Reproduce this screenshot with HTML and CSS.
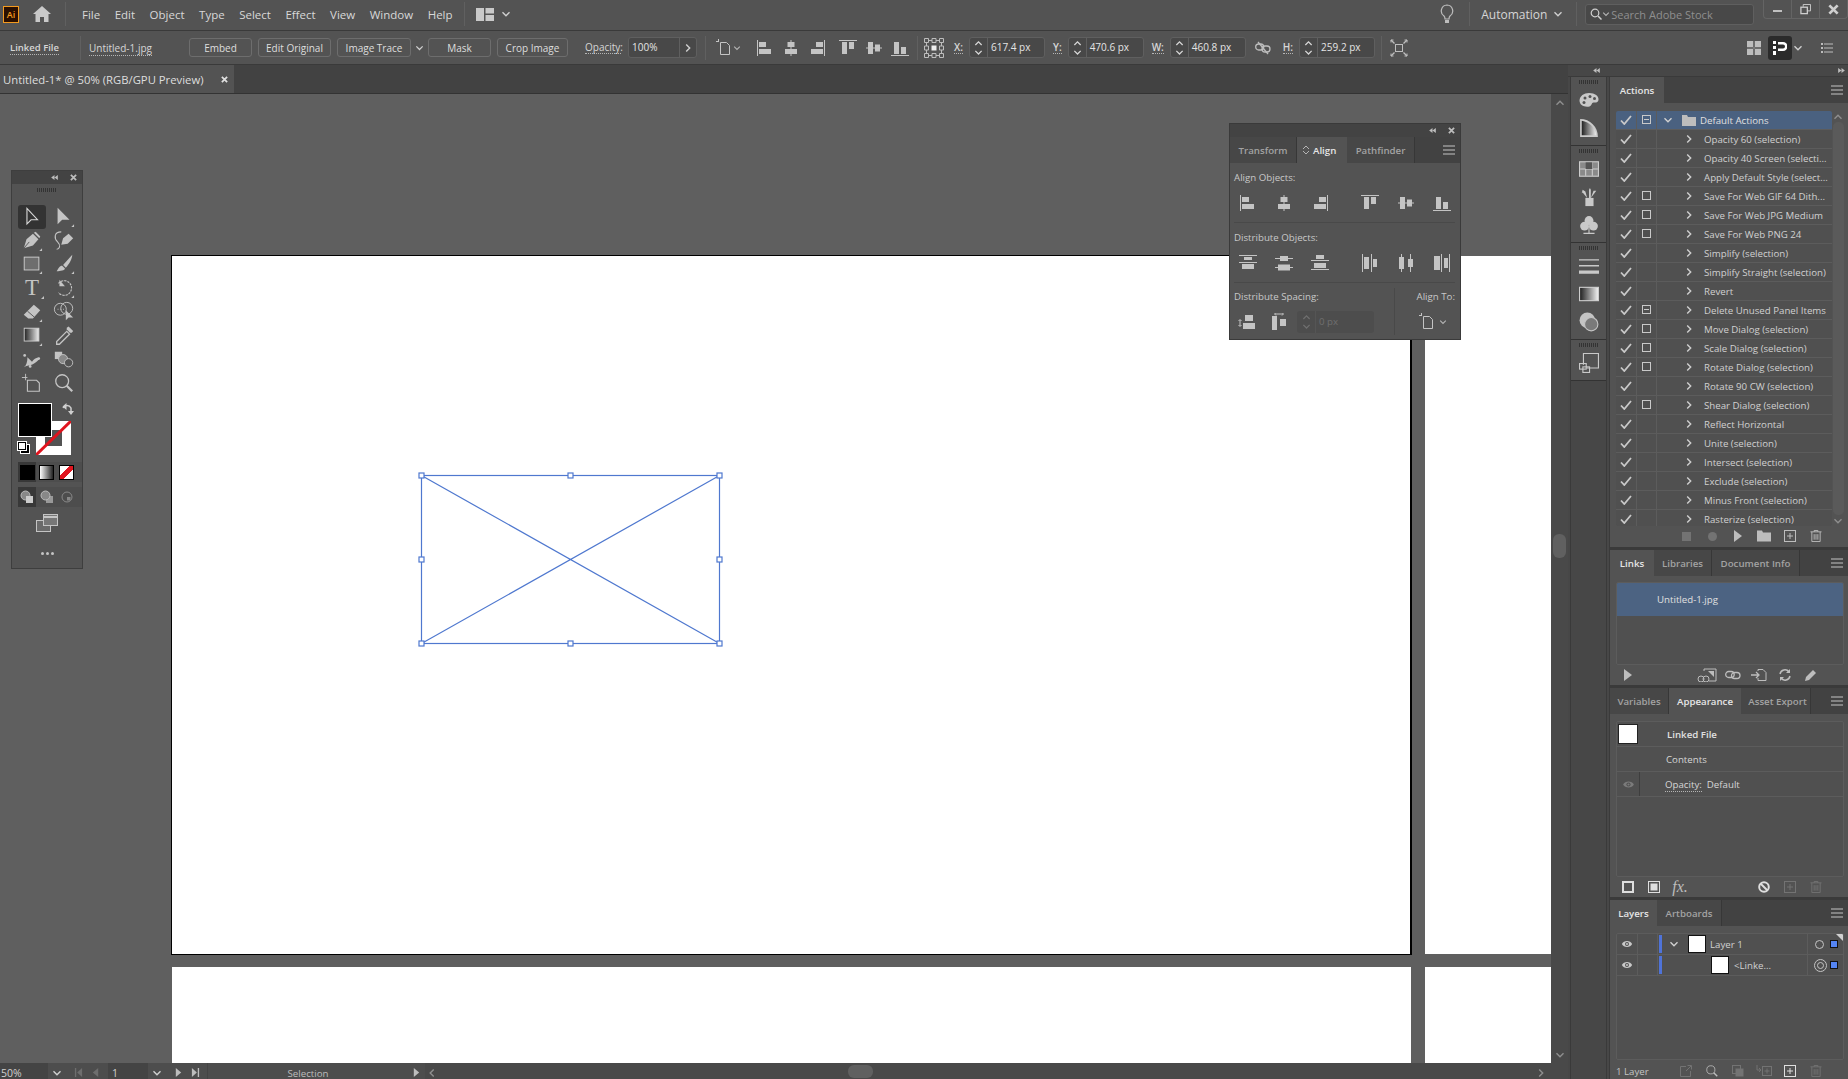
FILE: index.html
```html
<!DOCTYPE html>
<html lang="en">

<head>
    <meta charset="UTF-8">
    <meta name="viewport" content="width=device-width, initial-scale=1.0">
    <title>Adobe Illustrator</title>
    <link rel="stylesheet" href="styles.css">
</head>

<body>

    <!-- Icon sprite -->
    <svg class="sprite" xmlns="http://www.w3.org/2000/svg">
        <defs>
            <linearGradient id="grad-bw"><stop offset="0" stop-color="#222"/><stop offset="1" stop-color="#eee"/></linearGradient>
            <linearGradient id="grad-wb"><stop offset="0" stop-color="#fff"/><stop offset="1" stop-color="#333"/></linearGradient>
        </defs>
        <symbol id="chev-down" viewBox="0 0 10 10"><path d="M1.5 3.2 5 6.7 8.5 3.2" fill="none" stroke="currentColor" stroke-width="1.4"/></symbol>
        <symbol id="chev-up" viewBox="0 0 10 10"><path d="M1.5 6.7 5 3.2 8.5 6.7" fill="none" stroke="currentColor" stroke-width="1.4"/></symbol>
        <symbol id="chev-right" viewBox="0 0 10 10"><path d="M3.2 1.5 6.7 5 3.2 8.5" fill="none" stroke="currentColor" stroke-width="1.4"/></symbol>
        <symbol id="chev-left" viewBox="0 0 10 10"><path d="M6.7 1.5 3.2 5 6.7 8.5" fill="none" stroke="currentColor" stroke-width="1.4"/></symbol>
        <symbol id="updown" viewBox="0 0 8 10"><path d="M1 4 4 1l3 3M1 6l3 3 3-3" fill="none" stroke="currentColor"/></symbol>
        <symbol id="burger" viewBox="0 0 12 10"><path d="M0 1h12M0 5h12M0 9h12" stroke="currentColor" stroke-width="1"/></symbol>
        <symbol id="collapse" viewBox="0 0 8 6"><path d="M4 0v6L0 3zM8 0v6L4 3z" fill="currentColor"/></symbol>
        <symbol id="expand" viewBox="0 0 8 6"><path d="M0 0v6l4-3zM4 0v6l4-3z" fill="currentColor"/></symbol>
        <symbol id="close-x" viewBox="0 0 8 8"><path d="M1 1l6 6M7 1 1 7" stroke="currentColor" stroke-width="2"/></symbol>
        <symbol id="check" viewBox="0 0 12 10"><path d="M1 5.5 4.3 9 11 1" fill="none" stroke="currentColor" stroke-width="1.8"/></symbol>
        <symbol id="box" viewBox="0 0 10 10"><rect x=".5" y=".5" width="8" height="8" fill="none" stroke="currentColor"/></symbol>
        <symbol id="box-minus" viewBox="0 0 10 10"><rect x=".5" y=".5" width="8" height="8" fill="none" stroke="currentColor"/><path d="M2 4.5h5" stroke="currentColor"/></symbol>
        <symbol id="eye" viewBox="0 0 14 10"><path d="M1 5c2-4.500 10-4.500 12 0-2 4.500-10 4.500-12 0z" fill="currentColor"/><circle cx="7" cy="5" r="2.300" fill="#505050"/><circle cx="7" cy="5" r="1.200" fill="currentColor"/></symbol>
        <symbol id="play" viewBox="0 0 10 12"><path d="M1 0v12l8-6z" fill="currentColor"/></symbol>
        <symbol id="folder" viewBox="0 0 14 11"><path d="M0 0h5l1 2h8v9H0z" fill="currentColor"/></symbol>
        <symbol id="new-item" viewBox="0 0 12 12"><rect x=".5" y=".5" width="11" height="11" fill="none" stroke="currentColor"/><path d="M6 3v6M3 6h6" stroke="currentColor"/></symbol>
        <symbol id="trash" viewBox="0 0 12 13"><path d="M0 2h12M4 2V.5h4V2M1.500 2v10.500h9V2M4 4.500v6M6 4.500v6M8 4.500v6" fill="none" stroke="currentColor"/></symbol>
        <symbol id="doc-align" viewBox="0 0 20 18"><path d="M0 2.500h3M2.500 0v3" stroke="currentColor"/><path d="M4.500 3.500h6l3 3v9h-9z" fill="none" stroke="currentColor"/></symbol>

        <!-- Align icons -->
        <symbol id="al-left" viewBox="0 0 18 18"><path d="M1 1h1v16H1zM3 3h7v5H3zM3 10h12v5H3z" fill="currentColor"/></symbol>
        <symbol id="al-hc" viewBox="0 0 18 18"><path d="M8.500 1h1v16h-1zM5.500 3h7v5h-7zM3 10h12v5H3z" fill="currentColor"/></symbol>
        <symbol id="al-right" viewBox="0 0 18 18"><path d="M16 1h1v16h-1zM8 3h7v5H8zM3 10h12v5H3z" fill="currentColor"/></symbol>
        <symbol id="al-top" viewBox="0 0 18 18"><path d="M0 1h18v1H0zM3 3h5v12H3zM10 3h5v7h-5z" fill="currentColor"/></symbol>
        <symbol id="al-vc" viewBox="0 0 18 18"><path d="M1 8.500h16v1H1zM3 3h5v12H3zM10 5.500h5v7h-5z" fill="currentColor"/></symbol>
        <symbol id="al-bottom" viewBox="0 0 18 18"><path d="M0 16h18v1H0zM3 3h5v12H3zM10 8h5v7h-5z" fill="currentColor"/></symbol>
        <symbol id="di-top" viewBox="0 0 18 18"><path d="M0 1h18v1H0zM5 3h8v3H5zM0 8h18v1H0zM3 10h12v5H3z" fill="currentColor"/></symbol>
        <symbol id="di-vc" viewBox="0 0 18 18"><path d="M0 4h18v1H0zM5 2h8v5H5zM0 13h18v1H0zM3 10.500h12v6H3z" fill="currentColor"/></symbol>
        <symbol id="di-bottom" viewBox="0 0 18 18"><path d="M5 1h8v4H5zM0 6h18v1H0zM3 9h12v5H3zM0 15h18v1H0z" fill="currentColor"/></symbol>
        <symbol id="di-left" viewBox="0 0 18 18"><path d="M1 0h1v18H1zM3 3h5v12H3zM10 0h1v18h-1zM12 5h4v8h-4z" fill="currentColor"/></symbol>
        <symbol id="di-hc" viewBox="0 0 18 18"><path d="M4 0h1v18H4zM2 3h5v12H2zM13 0h1v18h-1zM11 5h5v8h-5z" fill="currentColor"/></symbol>
        <symbol id="di-right" viewBox="0 0 18 18"><path d="M1 2h6v14H1zM8 0h1v18H8zM11 4h4v10h-4zM16 0h1v18h-1z" fill="currentColor"/></symbol>
        <symbol id="sp-v" viewBox="0 0 18 18"><path d="M2 7v6M.5 8 2 6.500 3.500 8M.5 12 2 13.500 3.500 12" fill="none" stroke="currentColor"/><path d="M7 2h8v6H7zM5 10h12v6H5z" fill="currentColor"/></symbol>
        <symbol id="sp-h" viewBox="0 0 18 18"><path d="M5 1h8M6 -.5 4.500 1 6 2.500M12 -.5 13.500 1 12 2.500" fill="none" stroke="currentColor"/><path d="M2 3h5v14H2zM10 6h6v7h-6z" fill="currentColor"/></symbol>

        <!-- Tool icons -->
        <symbol id="t-select" viewBox="0 0 24 24"><path d="M6.500 2.500v17l4.500-4.500h7z" fill="none" stroke="#d8d8d8" stroke-width="1.200"/></symbol>
        <symbol id="t-direct" viewBox="0 0 24 24"><path d="M5 2v18l5-5h8z" fill="currentColor"/><path d="M23 20v3h-3z" fill="currentColor"/></symbol>
        <symbol id="t-pen" viewBox="0 0 24 24"><path d="M3 20 6 10l7-6 6 6-6 7z" fill="currentColor"/><path d="M3 20 9 13" stroke="#535353"/><path d="M14 3l2-1 5 5-1 2z" fill="currentColor"/><path d="M23 20v3h-3z" fill="currentColor"/></symbol>
        <symbol id="t-curve" viewBox="0 0 24 24"><path d="M9 16l2-7 6-5 5 5-6 6z" fill="currentColor"/><path d="M9 2C1 2 1 9 5 13s2 8-1 8" fill="none" stroke="currentColor" stroke-width="1.200"/></symbol>
        <symbol id="t-rect" viewBox="0 0 24 24"><rect x="3.500" y="4.500" width="16" height="14" fill="#6e6e6e" stroke="#cfcfcf"/><path d="M23 20v3h-3z" fill="currentColor"/></symbol>
        <symbol id="t-brush" viewBox="0 0 24 24"><path d="M21 2 11 13l3 3C18 12 21 6 21 2zM10 14c-3 0-4 3-6 6 4 0 9-1 9-3z" fill="currentColor"/><path d="M23 20v3h-3z" fill="currentColor"/></symbol>
        <symbol id="t-rotate" viewBox="0 0 24 24"><path d="M6 7a8 8 0 1 1 0 10" fill="none" stroke="currentColor" stroke-width="1.200" stroke-dasharray="2.500 1"/><path d="M7 3v7h6z" fill="currentColor"/><path d="M23 20v3h-3z" fill="currentColor"/></symbol>
        <symbol id="t-eraser" viewBox="0 0 24 24"><path d="M3 15 14 4l7 6-8 9H8z" fill="currentColor"/><path d="M7 11l8 7" stroke="#535353"/><path d="M23 20v3h-3z" fill="currentColor"/></symbol>
        <symbol id="t-builder" viewBox="0 0 24 24"><circle cx="8" cy="9" r="6.500" fill="none" stroke="currentColor"/><circle cx="15" cy="8" r="6.500" fill="none" stroke="currentColor"/><path d="M5 9h1M8 9h1M11 9h1" stroke="currentColor"/><path d="M14 10v11l3-3h5z" fill="currentColor"/></symbol>
        <symbol id="t-gradient" viewBox="0 0 24 24"><rect x="3.500" y="3.500" width="16" height="14" fill="url(#grad-bw)" stroke="#cfcfcf"/><path d="M23 20v3h-3z" fill="currentColor"/></symbol>
        <symbol id="t-dropper" viewBox="0 0 24 24"><path d="M15 3l2-1.500 5 5-1.500 2-2 0-3.500-3.500z" fill="currentColor"/><path d="M15 7 4 18v3h3L18 10z" fill="none" stroke="currentColor" stroke-width="1.400"/></symbol>
        <symbol id="t-warp" viewBox="0 0 24 24"><path d="M3 20c3-2 4-6 4-11l5 5c2-3 4-4 7-5 3 0 2 3 0 3-2 2-5 5-10 6 0 0-3 0-6 2z" fill="currentColor"/><circle cx="4" cy="7" r="1.500" fill="currentColor"/><circle cx="10" cy="19" r="1.500" fill="currentColor"/></symbol>
        <symbol id="t-symbol" viewBox="0 0 24 24"><rect x="2" y="3" width="8" height="8" fill="currentColor"/><circle cx="11" cy="11" r="5" fill="#8a8a8a" stroke="currentColor"/><circle cx="17" cy="15" r="4.500" fill="#535353" stroke="currentColor"/></symbol>
        <symbol id="t-artboard" viewBox="0 0 24 24"><path d="M1 6h6M5 2v7" stroke="currentColor"/><path d="M7 9h10l3 3v9H7z" fill="none" stroke="currentColor" stroke-width="1.200"/></symbol>
        <symbol id="t-zoom" viewBox="0 0 24 24"><circle cx="10" cy="10" r="7" fill="none" stroke="currentColor" stroke-width="1.400"/><path d="M15 15l6 6" stroke="currentColor" stroke-width="2.400"/></symbol>
        <symbol id="t-draw-a" viewBox="0 0 14 14"><circle cx="5.500" cy="5.500" r="4.500" fill="#888" stroke="#bbb"/><rect x="6" y="6" width="7" height="7" fill="#ccc"/></symbol>
        <symbol id="t-draw-b" viewBox="0 0 14 14"><rect x="6" y="6" width="7" height="7" fill="#999"/><circle cx="5.500" cy="5.500" r="4.500" fill="#888" stroke="#bbb"/></symbol>
        <symbol id="t-draw-c" viewBox="0 0 14 14"><circle cx="7" cy="7" r="5" fill="none" stroke="#888"/><rect x="7" y="7" width="3.500" height="3.500" fill="#888"/></symbol>

        <!-- Dock icons -->
        <symbol id="d-palette" viewBox="0 0 20 16"><path d="M10 1c6 0 10 3 9.500 7-.5 3-3 2.500-5 2.500-2 0-1.500 3-4 4C5 15.500.500 13 .500 8.500.500 4 5 1 10 1z" fill="currentColor"/><circle cx="6" cy="6" r="1.500" fill="#535353"/><circle cx="11" cy="4.500" r="1.500" fill="#535353"/><circle cx="15.500" cy="6.500" r="1.500" fill="#535353"/><circle cx="5" cy="10.500" r="1.500" fill="#535353"/></symbol>
        <symbol id="d-guide" viewBox="0 0 18 18"><path d="M1 1c9 0 16 7 16 16H1z" fill="#ccc"/><path d="M2.500 2.500c7 1 12.500 6.500 13 13h-13z" fill="url(#grad-bw)"/></symbol>
        <symbol id="d-swatches" viewBox="0 0 18 14"><rect x=".5" y=".5" width="17" height="13" fill="#8a8a8a" stroke="#ccc"/><path d="M1 7h16M6 7v6M12 1v12" stroke="#ccc"/><rect x="6" y="1" width="6" height="6" fill="#555"/></symbol>
        <symbol id="d-brushes" viewBox="0 0 18 22"><path d="M5 12h9v9H5z" fill="currentColor"/><path d="M7 12 2 6l-1 1 1-4 3 2zM9 12V3l1-2 1 2v9zM11 12l3-8 3 0-2 3z" fill="currentColor"/></symbol>
        <symbol id="d-symbols" viewBox="0 0 18 18"><circle cx="9" cy="5" r="4" fill="currentColor"/><circle cx="5" cy="10" r="4" fill="currentColor"/><circle cx="13" cy="10" r="4" fill="currentColor"/><path d="M8.500 10h1v6h-1zM4 16h10v1H4z" fill="currentColor"/></symbol>
        <symbol id="d-stroke" viewBox="0 0 18 14"><path d="M0 1h18v1H0zM0 6h18v1.500H0zM0 11h18v3H0z" fill="currentColor"/></symbol>
        <symbol id="d-gradient" viewBox="0 0 18 13"><rect width="18" height="13" fill="#ccc"/><rect x="1" y="1" width="16" height="11" fill="url(#grad-bw)"/></symbol>
        <symbol id="d-transp" viewBox="0 0 18 18"><circle cx="7.500" cy="7.500" r="7" fill="#c4c4c4"/><circle cx="11" cy="11" r="6" fill="#7a7a7a" stroke="#c4c4c4"/></symbol>
        <symbol id="d-asset" viewBox="0 0 18 18"><path d="M4 10.500V.5h13.500v13H7" fill="none" stroke="currentColor"/><rect x=".5" y="9.500" width="6" height="5" fill="none" stroke="currentColor"/><rect x="3.500" y="12.500" width="6" height="5" fill="none" stroke="currentColor"/></symbol>

        <!-- Footer icons -->
        <symbol id="f-relink" viewBox="0 0 20 14"><path d="M7 3V1h12v12H12" fill="none" stroke="currentColor"/><path d="M11 3h6v6" fill="currentColor"/><circle cx="4" cy="11" r="3" fill="none" stroke="currentColor"/><circle cx="9" cy="11" r="3" fill="none" stroke="currentColor"/></symbol>
        <symbol id="f-link" viewBox="0 0 16 9"><rect x=".7" y="1" width="8.500" height="6" rx="3" fill="none" stroke="currentColor" stroke-width="1.300"/><rect x="6.500" y="2" width="8.500" height="6" rx="3" fill="none" stroke="currentColor" stroke-width="1.300"/></symbol>
        <symbol id="f-goto" viewBox="0 0 16 12"><path d="M0 6h7M5 3l3 3-3 3" fill="none" stroke="currentColor" stroke-width="1.300"/><path d="M7 2V.5h5l3 3v8H7V9" fill="none" stroke="currentColor"/></symbol>
        <symbol id="f-refresh" viewBox="0 0 12 12"><path d="M1 5a5 5 0 0 1 9-2M11 7a5 5 0 0 1-9 2" fill="none" stroke="currentColor" stroke-width="1.500"/><path d="M11 0v4H7zM1 12V8h4z" fill="currentColor"/></symbol>
        <symbol id="f-edit" viewBox="0 0 12 12"><path d="M0 12l1-4 7-7 3 3-7 7z" fill="currentColor"/></symbol>
        <symbol id="f-stroke-box" viewBox="0 0 12 12"><rect x="1" y="1" width="10" height="10" fill="none" stroke="currentColor" stroke-width="2"/></symbol>
        <symbol id="f-fill-box" viewBox="0 0 12 12"><rect x=".5" y=".5" width="11" height="11" fill="none" stroke="currentColor"/><rect x="2.500" y="2.500" width="7" height="7" fill="currentColor"/></symbol>
        <symbol id="f-clear" viewBox="0 0 12 12"><circle cx="6" cy="6" r="4.800" fill="none" stroke="currentColor" stroke-width="2"/><path d="M2.500 2.500l7 7" stroke="currentColor" stroke-width="2"/></symbol>
        <symbol id="f-export" viewBox="0 0 12 12"><path d="M6 1.500H.5v10h10V6M6 6l5-5M7.500.5h4v4" fill="none" stroke="currentColor"/></symbol>
        <symbol id="f-clip" viewBox="0 0 12 12"><rect x=".5" y=".5" width="8" height="8" fill="none" stroke="currentColor"/><rect x="3.500" y="3.500" width="8" height="8" fill="currentColor"/></symbol>
        <symbol id="f-sub" viewBox="0 0 16 12"><path d="M1 0v5h4M3 3l2 2-2 2" fill="none" stroke="currentColor"/><rect x="6.500" y="1.500" width="9" height="9" fill="none" stroke="currentColor"/><path d="M11 3.500v5M8.500 6h5" stroke="currentColor"/></symbol>

        <!-- Control bar extras -->
        <symbol id="c-grid" viewBox="0 0 20 20"><path d="M.5.5h4v4h-4zM8 .5h4v4H8zM15.500.5h4v4h-4zM.5 8h4v4h-4zM15.500 8h4v4h-4zM.5 15.500h4v4h-4zM8 15.500h4v4H8zM15.500 15.500h4v4h-4zM4.500 2.500H8M12 2.500h3.500M4.500 17.500H8M12 17.500h3.500M2.500 4.500V8M2.500 12v3.500M17.500 4.500V8M17.500 12v3.500" fill="none" stroke="currentColor"/><rect x="7.500" y="7.500" width="5" height="5" fill="#eee"/></symbol>
        <symbol id="c-unlink" viewBox="0 0 16 14"><rect x=".7" y="3" width="8" height="6" rx="3" fill="none" stroke="currentColor" stroke-width="1.300"/><rect x="7" y="5" width="8" height="6" rx="3" fill="none" stroke="currentColor" stroke-width="1.300"/><path d="M3 1l10 12" stroke="currentColor" stroke-width="1.300"/></symbol>
        <symbol id="c-fit" viewBox="0 0 18 18"><rect x="5.500" y="5.500" width="7" height="7" fill="none" stroke="currentColor"/><path d="M1 1l3.500 3.500M17 1l-3.500 3.500M1 17l3.500-3.500M17 17l-3.500-3.500" stroke="currentColor" stroke-width="1.400"/><path d="M1 3.500V1h2.500M14.500 1H17v2.500M1 14.500V17h2.500M14.500 17H17v-2.500" fill="none" stroke="currentColor"/></symbol>
        <symbol id="c-cross" viewBox="0 0 14 14"><path d="M0 0h6v6H0zM8 0h6v6H8zM0 8h6v6H0zM8 8h6v6H8z" fill="currentColor"/><path d="M7 0v14M0 7h14" stroke="#888"/></symbol>
        <symbol id="c-guides" viewBox="0 0 14 14"><path d="M0 0h3v3H0zM0 5h3v3H0zM0 10h3v4H0zM5 1h5a4 4 0 0 1 0 9H5V7.500h5a1.500 1.500 0 0 0 0-4H5z" fill="#fff"/></symbol>
        <symbol id="c-list" viewBox="0 0 12 10"><path d="M0 0h2v2H0zM3 .5h9v1H3zM0 4h2v2H0zM3 4.500h9v1H3zM0 8h2v2H0zM3 8.500h9v1H3z" fill="currentColor"/></symbol>
        <symbol id="c-workspace" viewBox="0 0 18 13"><path d="M0 0h8v13H0zM9.500 0H18v5.500H9.500zM9.500 7H18v6H9.500z" fill="currentColor"/></symbol>
        <symbol id="c-home" viewBox="0 0 18 16"><path d="M9 0 0 8h2.500v8H7v-5h4v5h4.500V8H18z" fill="currentColor"/></symbol>
        <symbol id="c-bulb" viewBox="0 0 14 20"><path d="M7 1a6 6 0 0 0-3 11c.5.500 1 2 1 3h4c0-1 .5-2.500 1-3A6 6 0 0 0 7 1z" fill="none" stroke="currentColor" stroke-width="1.200"/><path d="M5 16h4v3H5z" fill="currentColor"/></symbol>
        <symbol id="c-search" viewBox="0 0 12 12"><circle cx="5" cy="5" r="3.800" fill="none" stroke="currentColor" stroke-width="1.200"/><path d="M8 8l3.500 3.500" stroke="currentColor" stroke-width="1.500"/></symbol>
        <symbol id="c-restore" viewBox="0 0 12 12"><path d="M3.500 3V.5h8v7H8.500" fill="none" stroke="currentColor"/><rect x="1" y="3.500" width="7" height="7" fill="none" stroke="currentColor" stroke-width="1.400"/></symbol>
        <symbol id="c-first" viewBox="0 0 10 10"><path d="M1 0h1.500v10H1zM9 0v10L3.500 5z" fill="currentColor"/></symbol>
        <symbol id="c-last" viewBox="0 0 10 10"><path d="M7.500 0H9v10H7.500zM1 0v10l5.500-5z" fill="currentColor"/></symbol>
        <symbol id="c-prev" viewBox="0 0 10 10"><path d="M8 0v10L2 5z" fill="currentColor"/></symbol>
        <symbol id="c-next" viewBox="0 0 10 10"><path d="M2 0v10l6-5z" fill="currentColor"/></symbol>
        <symbol id="c-swap" viewBox="0 0 12 12"><path d="M1 5a4.500 4.500 0 0 1 8 0v6" fill="none" stroke="currentColor" stroke-width="1.500"/><path d="M4.500 0 .5 3.500 4.500 7zM6 8l3 4 3-4z" fill="currentColor"/></symbol>
        <symbol id="c-screen" viewBox="0 0 22 18"><rect x=".5" y="6.500" width="14" height="11" fill="#6a6a6a" stroke="currentColor"/><rect x="7.500" y=".5" width="14" height="11" fill="#777" stroke="currentColor"/><path d="M8 3h13" stroke="currentColor" stroke-width="2"/></symbol>
    </svg>

    <div class="app">

        <!-- Menu Bar -->
        <header class="menu-bar">
            <div class="ai-logo">Ai</div>
            <svg class="home-icon"><use href="#c-home"/></svg>
            <span class="bar-sep sep-home"></span>
            <nav class="menu">
                <a>File</a>
                <a>Edit</a>
                <a>Object</a>
                <a>Type</a>
                <a>Select</a>
                <a>Effect</a>
                <a>View</a>
                <a>Window</a>
                <a>Help</a>
            </nav>
            <span class="bar-sep sep-menu"></span>
            <svg class="workspace-icon"><use href="#c-workspace"/></svg>
            <svg class="chev chev-workspace"><use href="#chev-down"/></svg>

            <svg class="bulb-icon"><use href="#c-bulb"/></svg>
            <span class="bar-sep sep-bulb"></span>
            <span class="automation">Automation</span>
            <svg class="chev chev-auto"><use href="#chev-down"/></svg>
            <span class="bar-sep sep-auto"></span>
            <div class="stock-search">
                <svg class="search-icon"><use href="#c-search"/></svg>
                <svg class="chev-small"><use href="#chev-down"/></svg>
                <span>Search Adobe Stock</span>
            </div>
            <div class="win-controls">
                <span class="win-btn"><i class="win-min"></i></span>
                <span class="win-btn"><svg class="win-ico"><use href="#c-restore"/></svg></span>
                <span class="win-btn"><svg class="win-ico"><use href="#close-x"/></svg></span>
            </div>
        </header>

        <!-- Control Bar -->
        <section class="control-bar">
            <div class="ctl-kind"><span class="dotted">Linked File</span></div>
            <div class="ctl-file"><span class="dotted">Untitled-1.jpg</span></div>
            <button class="ctl-btn btn-embed">Embed</button>
            <button class="ctl-btn btn-edit">Edit Original</button>
            <button class="ctl-btn btn-trace">Image Trace</button>
            <svg class="chev chev-trace"><use href="#chev-down"/></svg>
            <button class="ctl-btn btn-mask">Mask</button>
            <button class="ctl-btn btn-crop">Crop Image</button>
            <span class="dotted opacity-label">Opacity:</span>
            <div class="opacity-field">
                <span class="opacity-value">100%</span>
                <span class="opacity-arrow"><svg class="chev"><use href="#chev-right"/></svg></span>
            </div>
            <span class="bar-sep sep-opacity"></span>
            <svg class="doc-align-icon"><use href="#doc-align"/></svg>
            <svg class="chev-small chev-doc"><use href="#chev-down"/></svg>
            <div class="ctl-align">
                <svg><use href="#al-left"/></svg>
                <svg><use href="#al-hc"/></svg>
                <svg><use href="#al-right"/></svg>
                <svg class="gap-group"><use href="#al-top"/></svg>
                <svg><use href="#al-vc"/></svg>
                <svg><use href="#al-bottom"/></svg>
            </div>
            <span class="bar-sep sep-align"></span>
            <svg class="grid-icon"><use href="#c-grid"/></svg>

            <span class="dotted coord-label label-x">X:</span>
            <div class="num-field"><span class="stepper"><svg><use href="#chev-up"/></svg><svg><use href="#chev-down"/></svg></span><span class="num-value">617.4 px</span></div>
            <span class="dotted coord-label label-y">Y:</span>
            <div class="num-field"><span class="stepper"><svg><use href="#chev-up"/></svg><svg><use href="#chev-down"/></svg></span><span class="num-value">470.6 px</span></div>
            <span class="dotted coord-label label-w">W:</span>
            <div class="num-field"><span class="stepper"><svg><use href="#chev-up"/></svg><svg><use href="#chev-down"/></svg></span><span class="num-value">460.8 px</span></div>
            <svg class="unlink-icon"><use href="#c-unlink"/></svg>
            <span class="dotted coord-label label-h">H:</span>
            <div class="num-field"><span class="stepper"><svg><use href="#chev-up"/></svg><svg><use href="#chev-down"/></svg></span><span class="num-value">259.2 px</span></div>
            <span class="bar-sep sep-h"></span>
            <svg class="fit-icon"><use href="#c-fit"/></svg>

            <svg class="cross-icon"><use href="#c-cross"/></svg>
            <span class="guides-btn"><svg><use href="#c-guides"/></svg></span>
            <svg class="chev chev-guides"><use href="#chev-down"/></svg>
            <svg class="list-icon"><use href="#c-list"/></svg>
        </section>

        <div class="workspace">

            <div class="doc-area">
                <div class="doc-tabs">
                    <div class="doc-tab">
                        <span>Untitled-1* @ 50% (RGB/GPU Preview)</span>
                        <svg class="doc-close"><use href="#close-x"/></svg>
                    </div>
                </div>

                <div class="doc-main">
                    <!-- Canvas -->
                    <div class="canvas">
                        <div class="artboard board-main"></div>
                        <div class="artboard board-right"></div>
                        <div class="artboard board-below"></div>
                        <div class="artboard board-corner"></div>

                        <svg class="selection" viewBox="0 0 308 178">
                            <g fill="none" stroke="#4f78cf" stroke-width="1.200">
                                <rect x="5.500" y="5.500" width="298" height="168"/>
                                <path d="M5.500 5.500 303.500 173.500M303.500 5.500 5.500 173.500"/>
                                <g fill="#fff">
                                    <rect x="3" y="3" width="5" height="5"/>
                                    <rect x="152" y="3" width="5" height="5"/>
                                    <rect x="301" y="3" width="5" height="5"/>
                                    <rect x="3" y="87" width="5" height="5"/>
                                    <rect x="301" y="87" width="5" height="5"/>
                                    <rect x="3" y="171" width="5" height="5"/>
                                    <rect x="152" y="171" width="5" height="5"/>
                                    <rect x="301" y="171" width="5" height="5"/>
                                </g>
                            </g>
                        </svg>

                        <!-- Tools Panel -->
                        <aside class="tools">
                            <div class="float-head">
                                <svg class="head-collapse"><use href="#collapse"/></svg>
                                <svg class="head-close"><use href="#close-x"/></svg>
                            </div>
                            <div class="grip"></div>
                            <div class="tool-grid">
                                <span class="tool tool-active"><svg><use href="#t-select"/></svg></span>
                                <span class="tool"><svg><use href="#t-direct"/></svg></span>
                                <span class="tool"><svg><use href="#t-pen"/></svg></span>
                                <span class="tool"><svg><use href="#t-curve"/></svg></span>
                                <span class="tool"><svg><use href="#t-rect"/></svg></span>
                                <span class="tool"><svg><use href="#t-brush"/></svg></span>
                                <span class="tool tool-type">T</span>
                                <span class="tool"><svg><use href="#t-rotate"/></svg></span>
                                <span class="tool"><svg><use href="#t-eraser"/></svg></span>
                                <span class="tool"><svg><use href="#t-builder"/></svg></span>
                                <span class="tool"><svg><use href="#t-gradient"/></svg></span>
                                <span class="tool"><svg><use href="#t-dropper"/></svg></span>
                                <span class="tool"><svg><use href="#t-warp"/></svg></span>
                                <span class="tool"><svg><use href="#t-symbol"/></svg></span>
                                <span class="tool"><svg><use href="#t-artboard"/></svg></span>
                                <span class="tool"><svg><use href="#t-zoom"/></svg></span>
                            </div>
                            <div class="color-well">
                                <svg class="stroke-swatch" viewBox="0 0 35 34">
                                    <path d="M0 0h35v34H0z" fill="#fff"/>
                                    <path d="M9 9h17v16H9z" fill="#535353"/>
                                    <path d="M0 34 35 0" stroke="#e0141e" stroke-width="3"/>
                                </svg>
                                <div class="fill-swatch"></div>
                                <svg class="swap-icon"><use href="#c-swap"/></svg>
                                <div class="default-swatch"><i class="def-back"></i><i class="def-front"></i></div>
                            </div>
                            <div class="mode-row">
                                <span class="mode mode-on"><i class="mode-black"></i></span>
                                <span class="mode"><i class="mode-grad"></i></span>
                                <span class="mode"><i class="mode-none"></i></span>
                            </div>
                            <div class="mode-row draw-row">
                                <span class="mode mode-on"><svg><use href="#t-draw-a"/></svg></span>
                                <span class="mode"><svg><use href="#t-draw-b"/></svg></span>
                                <span class="mode"><svg class="dim"><use href="#t-draw-c"/></svg></span>
                            </div>
                            <svg class="screen-icon"><use href="#c-screen"/></svg>
                            <div class="tool-dots"><i></i><i></i><i></i></div>
                        </aside>

                        <!-- Align Panel -->
                        <aside class="align-panel">
                            <div class="float-head">
                                <svg class="head-collapse"><use href="#collapse"/></svg>
                                <svg class="head-close"><use href="#close-x"/></svg>
                            </div>
                            <div class="panel-tabs">
                                <span class="tab tab-transform">Transform</span>
                                <span class="tab tab-on tab-align"><svg class="tab-updown"><use href="#updown"/></svg>Align</span>
                                <span class="tab tab-pathfinder">Pathfinder</span>
                                <svg class="burger"><use href="#burger"/></svg>
                            </div>
                            <div class="align-section">
                                <div class="align-title">Align Objects:</div>
                                <div class="align-icons">
                                    <svg><use href="#al-left"/></svg>
                                    <svg><use href="#al-hc"/></svg>
                                    <svg><use href="#al-right"/></svg>
                                    <svg class="gap-group"><use href="#al-top"/></svg>
                                    <svg><use href="#al-vc"/></svg>
                                    <svg><use href="#al-bottom"/></svg>
                                </div>
                            </div>
                            <div class="align-section">
                                <div class="align-title">Distribute Objects:</div>
                                <div class="align-icons">
                                    <svg><use href="#di-top"/></svg>
                                    <svg><use href="#di-vc"/></svg>
                                    <svg><use href="#di-bottom"/></svg>
                                    <svg class="gap-group"><use href="#di-left"/></svg>
                                    <svg><use href="#di-hc"/></svg>
                                    <svg><use href="#di-right"/></svg>
                                </div>
                            </div>
                            <div class="align-last">
                                <div class="spacing-col">
                                    <div class="align-title">Distribute Spacing:</div>
                                    <div class="spacing-row">
                                        <svg><use href="#sp-v"/></svg>
                                        <svg class="sp-h-icon"><use href="#sp-h"/></svg>
                                        <div class="spacing-field">
                                            <span class="spacing-step"><svg><use href="#chev-up"/></svg><svg><use href="#chev-down"/></svg></span>
                                            <span>0 px</span>
                                        </div>
                                    </div>
                                </div>
                                <div class="alignto-col">
                                    <div class="align-title">Align To:</div>
                                    <div class="alignto-icon">
                                        <svg class="doc-align-icon"><use href="#doc-align"/></svg>
                                        <svg class="chev-small"><use href="#chev-down"/></svg>
                                    </div>
                                </div>
                            </div>
                        </aside>
                    </div>

                    <!-- Vertical scrollbar -->
                    <div class="v-scroll">
                        <svg class="scroll-arrow"><use href="#chev-up"/></svg>
                        <div class="v-thumb"></div>
                        <svg class="scroll-arrow scroll-end"><use href="#chev-down"/></svg>
                    </div>
                </div>

                <!-- Status Bar -->
                <footer class="status-bar">
                    <span class="st-field st-zoom">50%</span>
                    <span class="st-cell"><svg class="chev"><use href="#chev-down"/></svg></span>
                    <span class="st-nav st-nav-off"><svg><use href="#c-first"/></svg><svg><use href="#c-prev"/></svg></span>
                    <span class="st-field st-page">1</span>
                    <span class="st-cell"><svg class="chev"><use href="#chev-down"/></svg></span>
                    <span class="st-nav"><svg><use href="#c-next"/></svg><svg><use href="#c-last"/></svg></span>
                    <span class="st-tool">Selection</span>
                    <span class="st-cell st-play"><svg><use href="#c-next"/></svg></span>
                    <div class="h-scroll">
                        <svg class="scroll-arrow"><use href="#chev-left"/></svg>
                        <div class="h-thumb"></div>
                        <svg class="scroll-arrow scroll-end-h"><use href="#chev-right"/></svg>
                    </div>
                </footer>
            </div>

            <!-- Right Dock -->
            <div class="dock">
                <div class="dock-head">
                    <svg class="head-collapse"><use href="#collapse"/></svg>
                    <svg class="head-expand"><use href="#expand"/></svg>
                </div>
                <div class="dock-body">
                    <div class="dock-icons">
                        <div class="dock-group group-two">
                            <div class="grip"></div>
                            <svg class="di di-palette"><use href="#d-palette"/></svg>
                            <svg class="di"><use href="#d-guide"/></svg>
                        </div>
                        <div class="dock-group group-three">
                            <div class="grip"></div>
                            <svg class="di"><use href="#d-swatches"/></svg>
                            <svg class="di"><use href="#d-brushes"/></svg>
                            <svg class="di"><use href="#d-symbols"/></svg>
                        </div>
                        <div class="dock-group group-three">
                            <div class="grip"></div>
                            <svg class="di"><use href="#d-stroke"/></svg>
                            <svg class="di"><use href="#d-gradient"/></svg>
                            <svg class="di"><use href="#d-transp"/></svg>
                        </div>
                        <div class="dock-group group-one">
                            <div class="grip"></div>
                            <svg class="di"><use href="#d-asset"/></svg>
                        </div>
                    </div>

                    <div class="panels">

                        <!-- Actions -->
                        <section class="panel panel-actions">
                            <div class="panel-tabs">
                                <span class="tab tab-on tab-actions">Actions</span>
                                <svg class="burger"><use href="#burger"/></svg>
                            </div>
                            <div class="actions-wrap">
                                <div class="list actions-list">
                                    <div class="act-row act-set"><span class="c-check"><svg><use href="#check"/></svg></span><span class="c-dlg"><svg><use href="#box-minus"/></svg></span><svg class="chev set-chev"><use href="#chev-down"/></svg><svg class="set-folder"><use href="#folder"/></svg><span>Default Actions</span></div>
                                    <div class="act-row"><span class="c-check"><svg><use href="#check"/></svg></span><span class="c-dlg"></span><svg class="chev act-chev"><use href="#chev-right"/></svg><span>Opacity 60 (selection)</span></div>
                                    <div class="act-row"><span class="c-check"><svg><use href="#check"/></svg></span><span class="c-dlg"></span><svg class="chev act-chev"><use href="#chev-right"/></svg><span>Opacity 40 Screen (selecti...</span></div>
                                    <div class="act-row"><span class="c-check"><svg><use href="#check"/></svg></span><span class="c-dlg"></span><svg class="chev act-chev"><use href="#chev-right"/></svg><span>Apply Default Style (select...</span></div>
                                    <div class="act-row"><span class="c-check"><svg><use href="#check"/></svg></span><span class="c-dlg"><svg><use href="#box"/></svg></span><svg class="chev act-chev"><use href="#chev-right"/></svg><span>Save For Web GIF 64 Dith...</span></div>
                                    <div class="act-row"><span class="c-check"><svg><use href="#check"/></svg></span><span class="c-dlg"><svg><use href="#box"/></svg></span><svg class="chev act-chev"><use href="#chev-right"/></svg><span>Save For Web JPG Medium</span></div>
                                    <div class="act-row"><span class="c-check"><svg><use href="#check"/></svg></span><span class="c-dlg"><svg><use href="#box"/></svg></span><svg class="chev act-chev"><use href="#chev-right"/></svg><span>Save For Web PNG 24</span></div>
                                    <div class="act-row"><span class="c-check"><svg><use href="#check"/></svg></span><span class="c-dlg"></span><svg class="chev act-chev"><use href="#chev-right"/></svg><span>Simplify (selection)</span></div>
                                    <div class="act-row"><span class="c-check"><svg><use href="#check"/></svg></span><span class="c-dlg"></span><svg class="chev act-chev"><use href="#chev-right"/></svg><span>Simplify Straight (selection)</span></div>
                                    <div class="act-row"><span class="c-check"><svg><use href="#check"/></svg></span><span class="c-dlg"></span><svg class="chev act-chev"><use href="#chev-right"/></svg><span>Revert</span></div>
                                    <div class="act-row"><span class="c-check"><svg><use href="#check"/></svg></span><span class="c-dlg"><svg><use href="#box-minus"/></svg></span><svg class="chev act-chev"><use href="#chev-right"/></svg><span>Delete Unused Panel Items</span></div>
                                    <div class="act-row"><span class="c-check"><svg><use href="#check"/></svg></span><span class="c-dlg"><svg><use href="#box"/></svg></span><svg class="chev act-chev"><use href="#chev-right"/></svg><span>Move Dialog (selection)</span></div>
                                    <div class="act-row"><span class="c-check"><svg><use href="#check"/></svg></span><span class="c-dlg"><svg><use href="#box"/></svg></span><svg class="chev act-chev"><use href="#chev-right"/></svg><span>Scale Dialog (selection)</span></div>
                                    <div class="act-row"><span class="c-check"><svg><use href="#check"/></svg></span><span class="c-dlg"><svg><use href="#box"/></svg></span><svg class="chev act-chev"><use href="#chev-right"/></svg><span>Rotate Dialog (selection)</span></div>
                                    <div class="act-row"><span class="c-check"><svg><use href="#check"/></svg></span><span class="c-dlg"></span><svg class="chev act-chev"><use href="#chev-right"/></svg><span>Rotate 90 CW (selection)</span></div>
                                    <div class="act-row"><span class="c-check"><svg><use href="#check"/></svg></span><span class="c-dlg"><svg><use href="#box"/></svg></span><svg class="chev act-chev"><use href="#chev-right"/></svg><span>Shear Dialog (selection)</span></div>
                                    <div class="act-row"><span class="c-check"><svg><use href="#check"/></svg></span><span class="c-dlg"></span><svg class="chev act-chev"><use href="#chev-right"/></svg><span>Reflect Horizontal</span></div>
                                    <div class="act-row"><span class="c-check"><svg><use href="#check"/></svg></span><span class="c-dlg"></span><svg class="chev act-chev"><use href="#chev-right"/></svg><span>Unite (selection)</span></div>
                                    <div class="act-row"><span class="c-check"><svg><use href="#check"/></svg></span><span class="c-dlg"></span><svg class="chev act-chev"><use href="#chev-right"/></svg><span>Intersect (selection)</span></div>
                                    <div class="act-row"><span class="c-check"><svg><use href="#check"/></svg></span><span class="c-dlg"></span><svg class="chev act-chev"><use href="#chev-right"/></svg><span>Exclude (selection)</span></div>
                                    <div class="act-row"><span class="c-check"><svg><use href="#check"/></svg></span><span class="c-dlg"></span><svg class="chev act-chev"><use href="#chev-right"/></svg><span>Minus Front (selection)</span></div>
                                    <div class="act-row"><span class="c-check"><svg><use href="#check"/></svg></span><span class="c-dlg"></span><svg class="chev act-chev"><use href="#chev-right"/></svg><span>Rasterize (selection)</span></div>
                                </div>
                                <div class="list-scroll">
                                    <svg class="scroll-arrow"><use href="#chev-up"/></svg>
                                    <div class="list-thumb"></div>
                                    <svg class="scroll-arrow"><use href="#chev-down"/></svg>
                                </div>
                            </div>
                            <div class="panel-foot foot-right">
                                <i class="foot-btn"><b class="stop-icon"></b></i>
                                <i class="foot-btn"><b class="rec-icon"></b></i>
                                <i class="foot-btn"><svg class="f12"><use href="#play"/></svg></i>
                                <i class="foot-btn"><svg class="f14"><use href="#folder"/></svg></i>
                                <i class="foot-btn"><svg class="f12"><use href="#new-item"/></svg></i>
                                <i class="foot-btn"><svg class="f12"><use href="#trash"/></svg></i>
                            </div>
                        </section>

                        <!-- Links -->
                        <section class="panel panel-links">
                            <div class="panel-tabs">
                                <span class="tab tab-on tab-links">Links</span>
                                <span class="tab tab-libraries">Libraries</span>
                                <span class="tab tab-docinfo">Document Info</span>
                                <svg class="burger"><use href="#burger"/></svg>
                            </div>
                            <div class="list list-grow">
                                <div class="link-row">Untitled-1.jpg</div>
                            </div>
                            <div class="panel-foot foot-links">
                                <i class="foot-play"><svg class="f12"><use href="#play"/></svg></i>
                                <i class="foot-btn"><svg class="f20"><use href="#f-relink"/></svg></i>
                                <i class="foot-btn"><svg class="f16"><use href="#f-link"/></svg></i>
                                <i class="foot-btn"><svg class="f16"><use href="#f-goto"/></svg></i>
                                <i class="foot-btn"><svg class="f12"><use href="#f-refresh"/></svg></i>
                                <i class="foot-btn"><svg class="f12"><use href="#f-edit"/></svg></i>
                            </div>
                        </section>

                        <!-- Appearance -->
                        <section class="panel panel-appearance">
                            <div class="panel-tabs">
                                <span class="tab tab-variables">Variables</span>
                                <span class="tab tab-on tab-appearance">Appearance</span>
                                <span class="tab tab-export">Asset Export</span>
                                <svg class="burger"><use href="#burger"/></svg>
                            </div>
                            <div class="list list-grow list-low">
                                <div class="app-row"><span class="app-swatch"></span><b class="app-title">Linked File</b></div>
                                <div class="app-row"><span class="app-text">Contents</span></div>
                                <div class="app-row">
                                    <span class="app-eye"><svg><use href="#eye"/></svg></span>
                                    <span class="app-text-op"><span class="dotted">Opacity:</span>&nbsp; Default</span>
                                </div>
                            </div>
                            <div class="panel-foot foot-right">
                                <i class="foot-btn foot-strong foot-a"><svg class="f12"><use href="#f-stroke-box"/></svg></i>
                                <i class="foot-btn foot-strong"><svg class="f12"><use href="#f-fill-box"/></svg></i>
                                <i class="foot-btn foot-fx">fx.</i>
                                <i class="foot-btn foot-strong foot-b"><svg class="f12"><use href="#f-clear"/></svg></i>
                                <i class="foot-btn foot-off"><svg class="f12"><use href="#new-item"/></svg></i>
                                <i class="foot-btn foot-off"><svg class="f12"><use href="#trash"/></svg></i>
                            </div>
                        </section>

                        <!-- Layers -->
                        <section class="panel panel-layers">
                            <div class="panel-tabs">
                                <span class="tab tab-on tab-layers">Layers</span>
                                <span class="tab tab-artboards">Artboards</span>
                                <svg class="burger"><use href="#burger"/></svg>
                            </div>
                            <div class="list list-grow list-low">
                                <div class="layer-row">
                                    <span class="c-check"><svg class="eye-icon"><use href="#eye"/></svg></span>
                                    <span class="c-dlg"></span>
                                    <span class="layer-color"></span>
                                    <svg class="chev layer-chev"><use href="#chev-down"/></svg>
                                    <span class="layer-thumb"></span>
                                    <span class="layer-name">Layer 1</span>
                                    <span class="layer-target"><i class="ring"></i><i class="sel-dot"></i></span>
                                    <i class="corner-mark"></i>
                                </div>
                                <div class="layer-row">
                                    <span class="c-check"><svg class="eye-icon"><use href="#eye"/></svg></span>
                                    <span class="c-dlg"></span>
                                    <span class="layer-color"></span>
                                    <span class="layer-thumb thumb-child"></span>
                                    <span class="layer-name">&lt;Linke...</span>
                                    <span class="layer-target"><i class="ring ring-double"></i><i class="sel-dot"></i></span>
                                </div>
                            </div>
                            <div class="panel-foot foot-right foot-layers">
                                <span class="layer-count">1 Layer</span>
                                <i class="foot-btn foot-off"><svg class="f12"><use href="#f-export"/></svg></i>
                                <i class="foot-btn"><svg class="f14"><use href="#t-zoom"/></svg></i>
                                <i class="foot-btn foot-off"><svg class="f12"><use href="#f-clip"/></svg></i>
                                <i class="foot-btn foot-off"><svg class="f16"><use href="#f-sub"/></svg></i>
                                <i class="foot-btn foot-strong"><svg class="f12"><use href="#new-item"/></svg></i>
                                <i class="foot-btn foot-off"><svg class="f12"><use href="#trash"/></svg></i>
                            </div>
                        </section>

                    </div>
                </div>
            </div>

        </div>
    </div>

</body>

</html>
```

FILE: styles.css
```css
/* Basic layout */
body {
    margin: 0;
    padding: 0;
    background-color: #535353;
    color: #d6d6d6;
    font-family: "Open Sans", "Liberation Sans", sans-serif;
    font-size: 9.7px;
}

.sprite {
    display: block;
    width: 0;
    height: 0;
}

.app {
    display: flex;
    flex-direction: column;
    width: 1848px;
    height: 1079px;
    overflow: hidden;
}

svg {
    display: block;
    flex-shrink: 0;
}

i,
b {
    font-style: normal;
}

.dotted {
    border-bottom: 1px dotted #b5b5b5;
    line-height: 12px;
}

.bar-sep {
    width: 1px;
    height: 24px;
    flex-shrink: 0;
    background-color: #606060;
}

.chev {
    width: 10px;
    height: 10px;
    color: #d0d0d0;
}

.chev-small {
    width: 8px;
    height: 8px;
    color: #b5b5b5;
}

/* Menu Bar */
.menu-bar {
    display: flex;
    align-items: center;
    height: 28px;
    padding-bottom: 2px;
    flex-shrink: 0;
    border-bottom: 1px solid #3a3a3a;
    background-color: #535353;
}

.ai-logo {
    width: 14px;
    height: 15px;
    margin-left: 3px;
    border: 1px solid #f39a1f;
    background-color: #2a0f00;
    color: #f39a1f;
    font-size: 9px;
    font-weight: 600;
    line-height: 15px;
    text-align: center;
}

.home-icon {
    width: 18px;
    height: 16px;
    margin-left: 14px;
    color: #c9c9c9;
}

.sep-home {
    margin-left: 14px;
}

.menu {
    display: flex;
    gap: 14.5px;
    margin-left: 16px;
    width: 383px;
    font-size: 11.5px;
    color: #d8d8d8;
}

.sep-menu {
    margin-left: 0;
}

.workspace-icon {
    width: 18px;
    height: 13px;
    margin-left: 11px;
    color: #c9c9c9;
}

.chev-workspace {
    margin-left: 7px;
}

.bulb-icon {
    width: 14px;
    height: 20px;
    margin-left: 929px;
    color: #bdbdbd;
}

.sep-bulb {
    margin-left: 15px;
}

.automation {
    width: 62px;
    margin-left: 11px;
    font-size: 12px;
    white-space: nowrap;
}

.chev-auto {
    margin-left: 10px;
}

.sep-auto {
    margin-left: 13px;
}

.stock-search {
    display: flex;
    align-items: center;
    width: 169px;
    height: 21px;
    margin-left: 8px;
    box-sizing: border-box;
    padding-left: 4px;
    border: 1px solid #5f5f5f;
    border-radius: 3px;
    background-color: #484848;
    color: #8f8f8f;
    font-size: 11px;
}

.search-icon {
    width: 12px;
    height: 12px;
    color: #cfcfcf;
}

.stock-search span {
    margin-left: 1px;
}

.win-controls {
    display: flex;
    align-self: flex-start;
    height: 18px;
    margin-left: 9px;
    border: 1px solid #646464;
    border-top: none;
    border-radius: 0 0 4px 4px;
}

.win-btn {
    display: flex;
    align-items: center;
    justify-content: center;
    width: 27px;
    color: #cfcfcf;
    border-left: 1px solid #646464;
}

.win-btn:first-child {
    border-left: none;
}

.win-min {
    width: 9px;
    height: 2px;
    margin-top: 4px;
    background-color: #c0c0c0;
}

.win-ico {
    width: 11px;
    height: 11px;
}

/* Control Bar */
.control-bar {
    display: flex;
    align-items: center;
    height: 33px;
    flex-shrink: 0;
    border-bottom: 1px solid #3a3a3a;
    background-color: #535353;
    font-size: 10px;
    white-space: nowrap;
}

.ctl-kind {
    width: 70px;
    padding-left: 10px;
    height: 24px;
    line-height: 24px;
    border-right: 1px solid #606060;
    font-size: 9.5px;
    font-weight: 600;
}

.ctl-file {
    width: 100px;
    padding-left: 8px;
}

.ctl-btn {
    height: 19px;
    flex-shrink: 0;
    padding: 0;
    margin-right: 6px;
    border: 1px solid #6d6d6d;
    border-radius: 3px;
    background-color: #535353;
    color: #dedede;
    font-family: inherit;
    font-size: 10px;
}

.btn-embed {
    width: 63px;
}

.btn-edit {
    width: 73px;
}

.btn-trace {
    width: 74px;
    margin-right: 0;
}

.chev-trace {
    margin: 0 4px;
    width: 9px;
}

.btn-mask {
    width: 63px;
}

.btn-crop {
    width: 71px;
    margin-right: 0;
}

.opacity-label {
    width: 36px;
    margin-left: 17px;
    margin-right: 7px;
}

.opacity-field {
    display: flex;
    width: 69px;
    height: 21px;
    box-sizing: border-box;
    border: 1px solid #5f5f5f;
    border-radius: 3px;
    background-color: #484848;
    line-height: 19px;
}

.opacity-value {
    width: 50px;
    padding-left: 3px;
    box-sizing: border-box;
    color: #e4e4e4;
}

.opacity-arrow {
    display: flex;
    align-items: center;
    justify-content: center;
    flex: 1;
    border-left: 1px solid #5f5f5f;
}

.sep-opacity {
    margin-left: 8px;
}

.doc-align-icon {
    width: 20px;
    height: 18px;
    color: #c4c4c4;
}

.control-bar .doc-align-icon {
    margin-left: 10px;
}

.chev-doc {
    margin-left: -3px;
}

.ctl-align {
    display: flex;
    width: 159px;
    margin-left: 15px;
    gap: 8px;
    color: #c4c4c4;
}

.ctl-align svg {
    width: 18px;
    height: 18px;
}

.ctl-align .gap-group {
    margin-left: 5px;
}

.sep-align {
    margin-left: 2px;
}

.grid-icon {
    width: 20px;
    height: 20px;
    margin-left: 6px;
    color: #bdbdbd;
}

.coord-label {
    font-weight: 600;
}

.label-x {
    margin-left: 10px;
    margin-right: 6px;
}

.label-y {
    margin-left: 8px;
    margin-right: 6px;
}

.label-w {
    margin-left: 8px;
    margin-right: 6px;
}

.label-h {
    margin-left: 12px;
    margin-right: 6px;
}

.num-field {
    display: flex;
    width: 76px;
    height: 21px;
    flex-shrink: 0;
    box-sizing: border-box;
    border: 1px solid #5f5f5f;
    border-radius: 3px;
    background-color: #484848;
    line-height: 19px;
}

.stepper {
    display: flex;
    flex-direction: column;
    justify-content: center;
    width: 17px;
    flex-shrink: 0;
    border-right: 1px solid #5f5f5f;
    color: #d8d8d8;
}

.stepper svg {
    width: 9px;
    height: 9px;
    margin-left: 4px;
}

.num-value {
    margin-left: 3px;
    color: #e4e4e4;
}

.unlink-icon {
    width: 16px;
    height: 14px;
    margin-left: 9px;
    color: #bdbdbd;
}

.sep-h {
    margin-left: 6px;
}

.fit-icon {
    width: 18px;
    height: 18px;
    margin-left: 8px;
    color: #bdbdbd;
}

.cross-icon {
    width: 14px;
    height: 14px;
    margin-left: auto;
    color: #bdbdbd;
}

.guides-btn {
    display: flex;
    align-items: center;
    justify-content: center;
    width: 24px;
    height: 24px;
    margin-left: 7px;
    border-radius: 3px;
    background-color: #2b2b2b;
}

.guides-btn svg {
    width: 14px;
    height: 14px;
}

.chev-guides {
    margin-left: 1px;
}

.list-icon {
    width: 12px;
    height: 10px;
    margin-left: 18px;
    margin-right: 15px;
    color: #bdbdbd;
}

/* Document area */
.workspace {
    display: flex;
    flex: 1;
    min-height: 0;
}

.doc-area {
    display: flex;
    flex-direction: column;
    width: 1568px;
    flex-shrink: 0;
}

.doc-tabs {
    height: 28px;
    flex-shrink: 0;
    border-bottom: 1px solid #333;
    background-color: #424242;
}

.doc-tab {
    display: flex;
    align-items: center;
    justify-content: space-between;
    width: 234px;
    height: 28px;
    box-sizing: border-box;
    padding: 0 6px 0 3px;
    background-color: #535353;
    font-size: 11.3px;
    white-space: nowrap;
    color: #dedede;
}

.doc-close {
    width: 7px;
    height: 7px;
    color: #e0e0e0;
}

.doc-main {
    display: flex;
    flex: 1;
    min-height: 0;
}

/* Canvas */
.canvas {
    position: relative;
    flex: 1;
    overflow: hidden;
    background-color: #5f5f5f;
}

.artboard {
    position: absolute;
    background-color: #fff;
}

.board-main {
    left: 171px;
    top: 161px;
    width: 1238px;
    height: 698px;
    border: 1px solid #000;
    border-right-width: 2px;
}

.board-right {
    left: 1425px;
    top: 162px;
    width: 140px;
    height: 698px;
}

.board-below {
    left: 172px;
    top: 873px;
    width: 1239px;
    height: 120px;
}

.board-corner {
    left: 1425px;
    top: 873px;
    width: 140px;
    height: 120px;
}

.selection {
    position: absolute;
    left: 416px;
    top: 376px;
    width: 308px;
    height: 178px;
}

/* Floating panels */
.float-head {
    display: flex;
    align-items: center;
    justify-content: flex-end;
    height: 13px;
    background-color: #434343;
    color: #bdbdbd;
}

.head-collapse {
    width: 7px;
    height: 5px;
}

.head-close {
    width: 7px;
    height: 7px;
    margin-left: 12px;
    margin-right: 5px;
}

.grip {
    height: 4px;
    margin: 4px auto 0;
    width: 20px;
    flex-shrink: 0;
    background: repeating-linear-gradient(90deg, #333 0 1px, transparent 1px 2px);
}

/* Tools Panel */
.tools {
    position: absolute;
    left: 11px;
    top: 76px;
    display: flex;
    flex-direction: column;
    width: 72px;
    height: 399px;
    box-sizing: border-box;
    border: 1px solid #3e3e3e;
    background-color: #535353;
}

.tool-grid {
    display: grid;
    grid-template-columns: 28px 32px;
    grid-auto-rows: 23.8px;
    margin: 13px 0 0 6px;
    column-gap: 2px;
    color: #c4c4c4;
}

.tool {
    display: flex;
    align-items: center;
    justify-content: center;
    border-radius: 3px;
}

.tool svg {
    width: 22px;
    height: 22px;
}

.tool-active {
    background-color: #333;
}

.tool-type {
    position: relative;
    font-family: "Liberation Serif", serif;
    font-size: 23px;
    line-height: 22px;
}

.tool-type::after {
    content: "";
    position: absolute;
    right: 2px;
    bottom: 1px;
    border-bottom: 3px solid #c4c4c4;
    border-left: 3px solid transparent;
}

.color-well {
    position: relative;
    height: 56px;
    margin-top: 6px;
}

.fill-swatch {
    position: absolute;
    left: 6px;
    top: 2px;
    width: 32px;
    height: 32px;
    border: 1px solid #fff;
    background-color: #000;
}

.stroke-swatch {
    position: absolute;
    left: 24px;
    top: 20px;
    width: 35px;
    height: 34px;
}

.swap-icon {
    position: absolute;
    left: 50px;
    top: 2px;
    width: 12px;
    height: 12px;
    color: #cfcfcf;
}

.default-swatch {
    position: absolute;
    left: 6px;
    top: 41px;
    width: 12px;
    height: 12px;
}

.def-back,
.def-front {
    position: absolute;
    width: 6px;
    height: 6px;
    border: 1px solid #000;
    outline: 1px solid #fff;
}

.def-back {
    left: 3px;
    top: 3px;
    background-color: #000;
}

.def-front {
    left: 0;
    top: 0;
    background-color: #fff;
}

.mode-row {
    display: grid;
    grid-template-columns: 18px 21px 19px;
    height: 20px;
    margin: 5px 0 0 6px;
    background-color: #4d4d4d;
}

.draw-row {
    margin-top: 5px;
}

.mode {
    display: flex;
    align-items: center;
    justify-content: center;
}

.mode svg {
    width: 14px;
    height: 14px;
}

.mode-on {
    background-color: #383838;
}

.mode-black,
.mode-grad,
.mode-none {
    display: block;
    width: 13px;
    height: 13px;
    border: 1px solid #000;
}

.mode-black {
    background-color: #000;
}

.mode-grad {
    background: linear-gradient(90deg, #fff, #222);
}

.mode-none {
    background: linear-gradient(135deg, #fff 36%, #e0141e 36% 64%, #fff 64%);
}

.screen-icon {
    width: 22px;
    height: 18px;
    margin: 7px auto 0;
    color: #c4c4c4;
}

.tool-dots {
    display: flex;
    justify-content: center;
    gap: 2px;
    margin-top: 20px;
}

.tool-dots i {
    width: 3px;
    height: 3px;
    border-radius: 50%;
    background-color: #c4c4c4;
}

/* Align Panel */
.align-panel {
    position: absolute;
    left: 1229px;
    top: 29px;
    width: 232px;
    height: 217px;
    box-sizing: border-box;
    border: 1px solid #3a3a3a;
    background-color: #535353;
}

.align-section {
    height: 60px;
    padding-top: 8px;
    box-sizing: border-box;
    border-bottom: 1px solid #494949;
    margin: 0 5px 0 4px;
}

.align-title {
    height: 14px;
    line-height: 14px;
    color: #c8c8c8;
}

.align-icons {
    display: flex;
    margin: 9px 0 0 -4px;
    color: #c4c4c4;
}

.align-icons svg {
    width: 18px;
    height: 18px;
    margin: 0 9px;
}

.align-icons .gap-group {
    margin-left: 23px;
}

.align-last {
    display: flex;
    height: 56px;
    margin: 0 5px 0 4px;
    padding-top: 5px;
    box-sizing: border-box;
}

.spacing-col {
    width: 161px;
    height: 47px;
    padding-top: 2px;
    box-sizing: border-box;
    border-right: 1px solid #494949;
}

.spacing-row {
    display: flex;
    align-items: center;
    margin-top: 7px;
    color: #c4c4c4;
}

.spacing-row > svg {
    width: 18px;
    height: 18px;
    margin-left: 4px;
}

.spacing-row .sp-h-icon {
    margin-left: 14px;
}

.spacing-field {
    display: flex;
    width: 77px;
    height: 22px;
    margin-left: 9px;
    border-radius: 3px;
    background-color: #4d4d4d;
    color: #6f6f6f;
    line-height: 22px;
}

.spacing-step {
    display: flex;
    flex-direction: column;
    justify-content: center;
    align-items: center;
    width: 18px;
    margin-right: 3px;
    border-right: 1px solid #555;
}

.spacing-step svg {
    width: 9px;
    height: 9px;
}

.alignto-col {
    flex: 1;
    padding-top: 2px;
    text-align: right;
}

.alignto-icon {
    display: flex;
    align-items: center;
    justify-content: flex-end;
    margin-top: 9px;
    padding-right: 8px;
}

/* Tabs shared by panels */
.panel-tabs {
    display: flex;
    align-items: stretch;
    height: 26px;
    flex-shrink: 0;
    background-color: #424242;
}

.tab {
    display: flex;
    align-items: center;
    justify-content: center;
    box-sizing: border-box;
    border-right: 1px solid #373737;
    background-color: #474747;
    color: #a3a3a3;
    font-weight: 600;
    white-space: nowrap;
}

.tab-on {
    border-right: none;
    background-color: #535353;
    color: #e6e6e6;
}

.burger {
    width: 12px;
    height: 10px;
    margin: 8px 5px 0 auto;
    color: #c4c4c4;
}

.tab-transform {
    width: 67px;
}

.tab-align {
    width: 50px;
    justify-content: flex-start;
    padding-left: 5px;
}

.tab-updown {
    width: 8px;
    height: 10px;
    margin-right: 3px;
    color: #b5b5b5;
}

.tab-pathfinder {
    width: 68px;
}

.tab-actions {
    width: 54px;
}

.tab-links {
    width: 44px;
}

.tab-libraries {
    width: 58px;
}

.tab-docinfo {
    width: 88px;
}

.tab-variables {
    width: 59px;
}

.tab-appearance {
    width: 72px;
}

.tab-export {
    width: 70px;
    padding-left: 4px;
}

.tab-layers {
    width: 47px;
}

.tab-artboards {
    width: 65px;
}

/* Scrollbars */
.scroll-arrow {
    width: 10px;
    height: 10px;
    flex-shrink: 0;
    color: #8f8f8f;
}

.v-scroll {
    display: flex;
    flex-direction: column;
    align-items: center;
    width: 17px;
    padding: 4px 0 3px;
    box-sizing: border-box;
    background-color: #494949;
}

.v-thumb {
    width: 13px;
    height: 24px;
    margin-top: 426px;
    border-radius: 6px;
    background-color: #606060;
}

.scroll-end {
    margin-top: auto;
}

/* Status Bar */
.status-bar {
    display: flex;
    align-items: stretch;
    height: 16px;
    flex-shrink: 0;
    overflow: hidden;
    background-color: #4d4d4d;
    color: #d0d0d0;
    line-height: 21px;
}

.status-bar svg {
    margin-top: 3px;
}

.st-field {
    background-color: #444;
}

.st-zoom {
    width: 47px;
    padding-left: 1px;
    font-size: 10.5px;
}

.st-page {
    width: 36px;
    padding-left: 4px;
    font-size: 10.5px;
}

.st-cell {
    display: flex;
    align-items: center;
    justify-content: center;
    width: 18px;
}

.st-nav {
    display: flex;
    align-items: center;
    justify-content: center;
    gap: 8px;
    width: 41px;
    color: #bdbdbd;
}

.st-nav svg {
    width: 9px;
    height: 9px;
}

.st-nav-off {
    width: 42px;
    color: #6e6e6e;
}

.st-tool {
    width: 201px;
    color: #bdbdbd;
    text-align: center;
    border-left: 1px solid #444;
    box-sizing: border-box;
}

.st-play {
    color: #bdbdbd;
    width: 17px;
}

.st-play svg {
    width: 9px;
    height: 9px;
}

.h-scroll {
    display: flex;
    align-items: center;
    flex: 1;
    padding-left: 2px;
    background-color: #494949;
}

.h-thumb {
    width: 25px;
    height: 13px;
    margin-left: 411px;
    border-radius: 6px;
    background-color: #606060;
}

.scroll-end-h {
    margin-left: 663px;
}

/* Right Dock */
.dock {
    display: flex;
    flex-direction: column;
    flex: 1;
    min-width: 0;
    background-color: #474747;
}

.dock-head {
    display: flex;
    align-items: center;
    justify-content: space-between;
    height: 12px;
    flex-shrink: 0;
    padding: 0 3px 0 0;
    border-bottom: 1px solid #3a3a3a;
    box-sizing: border-box;
    color: #bdbdbd;
}

.dock-head .head-collapse {
    margin-left: 25px;
}

.head-expand {
    width: 7px;
    height: 5px;
}

.dock-body {
    display: flex;
    flex: 1;
    min-height: 0;
}

.dock-icons {
    width: 37px;
    margin-left: 2px;
    flex-shrink: 0;
    box-sizing: border-box;
    border-left: 1px solid #3a3a3a;
    border-right: 1px solid #3a3a3a;
    color: #c9c9c9;
}

.dock-group {
    display: flex;
    flex-direction: column;
    align-items: center;
    border-bottom: 1px solid #333;
    background-color: #535353;
    box-sizing: border-box;
}

.group-two {
    height: 69px;
}

.group-three {
    height: 97px;
}

.group-one {
    height: 41px;
}

.dock-group .grip {
    margin-top: 3px;
    margin-bottom: 2px;
}

.di {
    width: 20px;
    height: 20px;
    margin: 4px 0;
}

.panels {
    display: flex;
    flex-direction: column;
    flex: 1;
    min-width: 0;
    margin-left: 2px;
    border-left: 1px solid #3a3a3a;
    gap: 3px;
    background-color: #3a3a3a;
}

/* Docked panels */
.panel {
    display: flex;
    flex-direction: column;
    flex-shrink: 0;
    background-color: #535353;
}

.panel-actions {
    height: 470px;
}

.panel-links {
    height: 135px;
}

.panel-appearance {
    height: 209px;
}

.panel-layers {
    height: 180px;
}

.list {
    box-sizing: border-box;
    border: 1px solid #5c5c5c;
    border-radius: 2px;
    background-color: #505050;
}

.list-grow {
    flex: 1;
    min-height: 0;
    margin: 6px 4px 0 6px;
    overflow: hidden;
}

.list-low {
    margin-top: 7px;
}

.actions-wrap {
    display: flex;
    height: 415px;
    flex-shrink: 0;
    margin: 8px 4px 0 6px;
}

.actions-list {
    width: 216px;
    flex-shrink: 0;
    border: none;
    overflow: hidden;
}

.act-row {
    display: flex;
    align-items: center;
    height: 19px;
    box-sizing: border-box;
    border-bottom: 1px solid #5c5c5c;
    color: #d0d0d0;
    white-space: nowrap;
}

.act-set {
    background-color: #4a6180;
    color: #e0e0e0;
}

.c-check {
    display: flex;
    align-items: center;
    justify-content: center;
    width: 21px;
    height: 100%;
    box-sizing: border-box;
    flex-shrink: 0;
    border-right: 1px solid #5c5c5c;
    color: #c9c9c9;
}

.c-check svg {
    width: 12px;
    height: 10px;
}

.c-dlg {
    display: flex;
    align-items: center;
    justify-content: center;
    width: 20px;
    height: 100%;
    box-sizing: border-box;
    flex-shrink: 0;
    border-right: 1px solid #5c5c5c;
    color: #c9c9c9;
}

.c-dlg svg {
    width: 10px;
    height: 10px;
}

.set-chev {
    margin-left: 6px;
}

.set-folder {
    width: 14px;
    height: 11px;
    margin: 0 4px 0 9px;
    color: #bdbdbd;
}

.act-chev {
    margin-left: 27px;
    margin-right: 10px;
}

.list-scroll {
    display: flex;
    flex-direction: column;
    align-items: center;
    flex: 1;
    padding-top: 1px;
}

.list-thumb {
    flex: 1;
    width: 11px;
    margin: 0 0 1px;
    border-radius: 5px;
    background-color: #5a5a5a;
}

.panel-foot {
    display: flex;
    align-items: center;
    justify-content: flex-end;
    height: 20px;
    flex-shrink: 0;
    box-sizing: border-box;
    color: #bdbdbd;
}

.foot-right {
    padding-right: 19px;
}

.foot-links {
    padding-right: 24px;
}

.foot-btn {
    display: flex;
    align-items: center;
    justify-content: center;
    width: 26px;
    height: 16px;
}

.foot-play {
    margin-right: auto;
    margin-left: 12px;
}

.foot-off {
    color: #737373;
}

.foot-strong {
    color: #dedede;
}

.foot-a {
    margin-left: 5px;
}

.panel-appearance .panel-foot {
    justify-content: flex-start;
}

.foot-b {
    margin-left: 58px;
}

.foot-fx {
    font-family: "Liberation Serif", serif;
    font-size: 16px;
    font-style: italic;
    color: #bdbdbd;
}

.f12 {
    width: 12px;
    height: 12px;
}

.f14 {
    width: 14px;
    height: 14px;
}

.f16 {
    width: 16px;
    height: 12px;
}

.f20 {
    width: 20px;
    height: 14px;
}

.stop-icon {
    display: block;
    width: 9px;
    height: 9px;
    background-color: #737373;
}

.rec-icon {
    display: block;
    width: 9px;
    height: 9px;
    border-radius: 50%;
    background-color: #737373;
}

/* Links */
.link-row {
    height: 33px;
    padding-left: 40px;
    background-color: #4c6382;
    color: #e0e0e0;
    line-height: 33px;
}

/* Appearance */
.app-row {
    display: flex;
    align-items: center;
    height: 25px;
    box-sizing: border-box;
    border-bottom: 1px solid #5c5c5c;
}

.app-swatch {
    width: 18px;
    height: 18px;
    margin-left: 1px;
    border: 1px solid #222;
    background-color: #fff;
}

.app-title {
    margin-left: 29px;
    font-weight: 600;
    color: #e0e0e0;
}

.app-text {
    margin-left: 49px;
}

.app-eye {
    display: flex;
    align-items: center;
    justify-content: center;
    width: 23px;
    height: 100%;
    box-sizing: border-box;
    border-right: 1px solid #3e3e3e;
    color: #7b7b7b;
}

.app-eye svg {
    width: 13px;
    height: 9px;
}

.app-text-op {
    margin-left: 25px;
}

/* Layers */
.layer-row {
    position: relative;
    display: flex;
    align-items: center;
    height: 21px;
    box-sizing: border-box;
    border-bottom: 1px solid #5c5c5c;
}

.eye-icon {
    width: 13px;
    height: 9px;
}

.layer-color {
    width: 3px;
    height: 18px;
    margin-left: 1px;
    background-color: #4f73d8;
}

.layer-chev {
    margin-left: 7px;
}

.layer-thumb {
    width: 16px;
    height: 16px;
    margin-left: 9px;
    border: 1px solid #111;
    background-color: #fff;
}

.thumb-child {
    margin-left: 49px;
}

.layer-name {
    margin-left: 4px;
    color: #d0d0d0;
}

.thumb-child + .layer-name {
    margin-left: 5px;
}

.layer-target {
    display: flex;
    align-items: center;
    margin-left: auto;
    height: 100%;
    width: 36px;
    box-sizing: border-box;
    padding-left: 6px;
    border-left: 1px solid #5c5c5c;
}

.ring {
    width: 7px;
    height: 7px;
    border: 1px solid #c4c4c4;
    border-radius: 50%;
    margin-left: 1px;
}

.ring-double {
    width: 5px;
    height: 5px;
    margin-left: 3px;
    outline: 1px solid #c4c4c4;
    outline-offset: 2px;
    border-radius: 50%;
}

.sel-dot {
    width: 6px;
    height: 6px;
    margin-left: 6px;
    border: 1px solid #111;
    background-color: #5484f2;
}

.corner-mark {
    position: absolute;
    right: 0;
    top: 0;
    border-top: 7px solid #d0d0d0;
    border-left: 7px solid transparent;
}

.foot-layers {
    justify-content: flex-end;
    padding-top: 2px;
}

.layer-count {
    margin-right: auto;
    padding-left: 6px;
    color: #c4c4c4;
}
```
